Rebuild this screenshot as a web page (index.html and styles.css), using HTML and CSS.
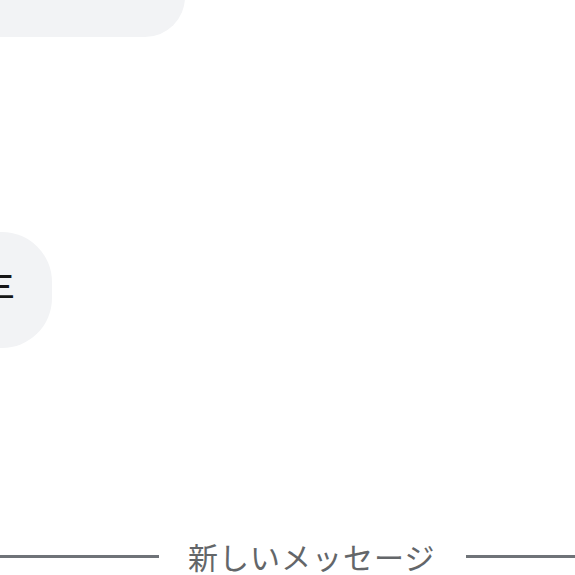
FILE: index.html
```html
<!DOCTYPE html>
<html lang="ja">
<head>
  <meta charset="UTF-8" />
  <meta name="viewport" content="width=device-width, initial-scale=1.0"/>
  <title>チャット</title>
  <link rel="stylesheet" href="styles.css">
</head>
<body>
  <div class="chat">
    <div class="bubble bubble-top"></div>
    <div class="bubble bubble-mid"><span class="msg">三</span></div>

    <div class="divider">
      <div class="line line-left"></div>
      <div class="divider-text">新しいメッセージ</div>
      <div class="line line-right"></div>
    </div>
  </div>
</body>
</html>
```

FILE: styles.css
```css
body {
  margin: 0;
  background: #ffffff;
  font-family: "Noto Sans CJK JP", "Noto Sans", sans-serif;
  overflow: hidden;
}
.chat {
  display: flex;
  flex-direction: column;
  height: 575px;
}
.bubble {
  background: #f2f3f5;
  border-radius: 40px;
  color: #161616;
}
.bubble-top {
  width: 285px;
  height: 80px;
  margin-top: -43px;
  margin-left: -100px;
}
.bubble-mid {
  width: 152px;
  height: 116px;
  margin-top: 195px;
  margin-left: -100px;
  border-radius: 50px;
  display: flex;
  align-items: center;
  justify-content: flex-end;
  padding-right: 37px;
  box-sizing: border-box;
}
.msg {
  font-size: 30px;
  line-height: 30px;
  font-weight: 500;
  margin-top: -12px;
}
.divider {
  display: flex;
  align-items: center;
  margin-top: 190px;
  height: 36px;
}
.line {
  height: 3px;
  background: #6f7378;
}
.line-left {
  width: 159px;
}
.line-right {
  flex: 1;
}
.divider-text {
  margin: 0 31px 0 29px;
  font-size: 30px;
  line-height: 36px;
  letter-spacing: 1px;
  color: #636669;
  white-space: nowrap;
}
```
